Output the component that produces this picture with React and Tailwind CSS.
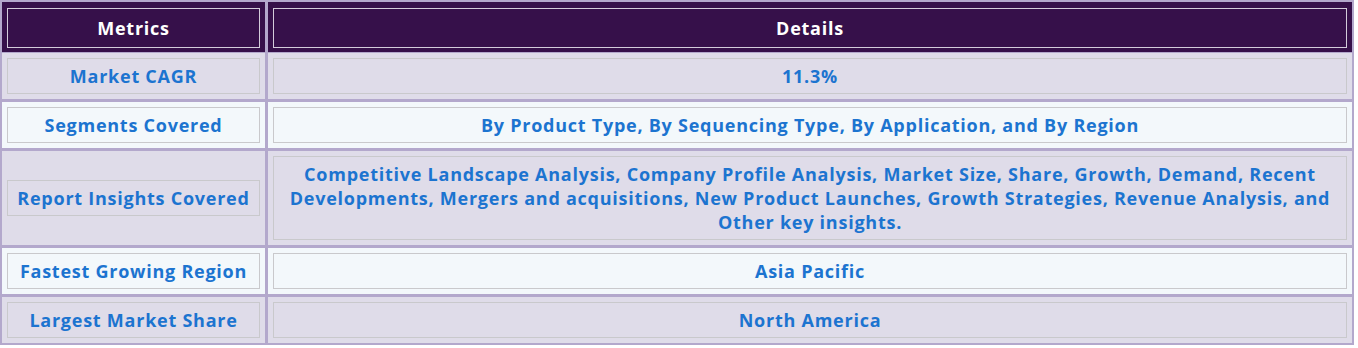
const rows = [
  { metric: 'Market CAGR', detail: '11.3%', bg: 'bg-[#dfdce9]' },
  {
    metric: 'Segments Covered',
    detail: 'By Product Type, By Sequencing Type, By Application, and By Region',
    bg: 'bg-[#f3f8fb]',
  },
  {
    metric: 'Report Insights Covered',
    detail:
      'Competitive Landscape Analysis, Company Profile Analysis, Market Size, Share, Growth, Demand, Recent Developments, Mergers and acquisitions, New Product Launches, Growth Strategies, Revenue Analysis, and Other key insights.',
    bg: 'bg-[#dfdce9]',
  },
  { metric: 'Fastest Growing Region', detail: 'Asia Pacific', bg: 'bg-[#f3f8fb]' },
  { metric: 'Largest Market Share', detail: 'North America', bg: 'bg-[#dfdce9]' },
];

const Cell = ({ children, bg }) => (
  <div className={`${bg} flex items-center px-[5px] py-[5px]`}>
    <div className="w-full border border-[#c9c9cc] px-[4px] py-[5px] text-center text-[18px] leading-[24px] tracking-[0.75px] font-bold text-[#1c74d0]">
      {children}
    </div>
  </div>
);

export default function App() {
  return (
    <div className="bg-white h-[348px] font-['Open_Sans',sans-serif]">
      <div className="w-[1354px] border-2 border-[#b3a8cc] bg-[#b3a8cc] flex flex-col gap-px">
        {/* Header */}
        <div className="grid grid-cols-[263px_1fr] gap-x-[3px]">
          <div className="bg-[#36104a] px-[5px] pt-[6px] pb-[4px]">
            <div className="border border-[#d3ccdb] py-[7px] text-center text-[18px] leading-[24px] tracking-[0.75px] font-bold text-white">
              Metrics
            </div>
          </div>
          <div className="bg-[#36104a] px-[5px] pt-[6px] pb-[4px]">
            <div className="border border-[#d3ccdb] py-[7px] text-center text-[18px] leading-[24px] tracking-[0.75px] font-bold text-white">
              Details
            </div>
          </div>
        </div>

        {/* Body */}
        <div className="flex flex-col gap-[3px]">
          {rows.map((r) => (
            <div key={r.metric} className="grid grid-cols-[263px_1fr] gap-x-[3px]">
              <Cell bg={r.bg}>{r.metric}</Cell>
              <Cell bg={r.bg}>{r.detail}</Cell>
            </div>
          ))}
        </div>
      </div>
    </div>
  );
}
